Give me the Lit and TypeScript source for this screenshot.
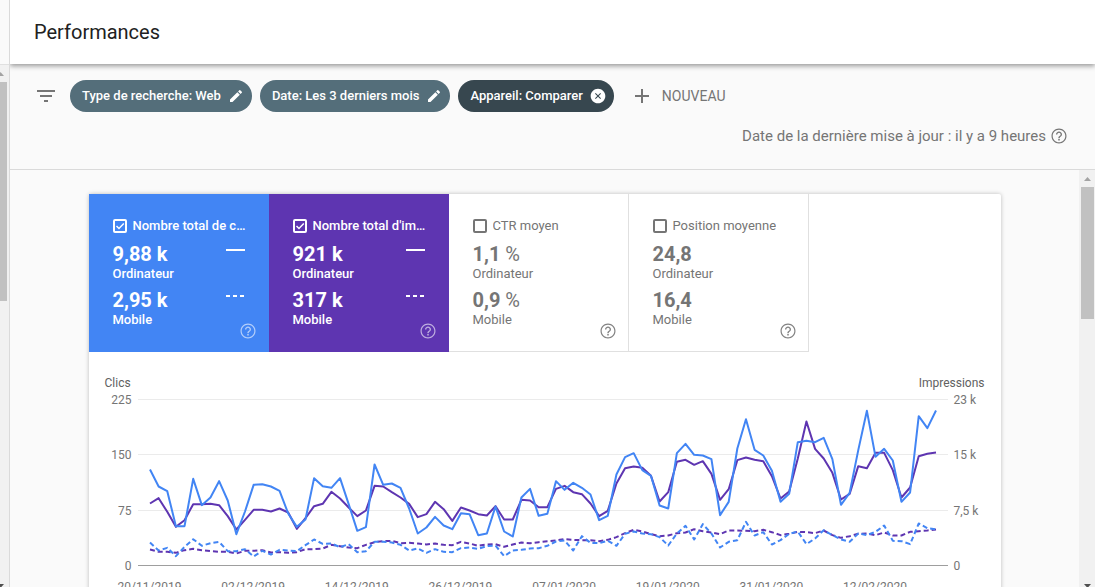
import { LitElement, html, svg, css, nothing } from "lit";
import { customElement, property } from "lit/decorators.js";
import { classMap } from "lit/directives/class-map.js";

type Metric = {
  id: string;
  title: string;
  tone: string;
  checked: boolean;
  desktop: string;
  mobile: string;
  unit?: string;
};

const METRICS: Metric[] = [
  { id: "clicks", title: "Nombre total de clics", tone: "blue", checked: true, desktop: "9,88 k", mobile: "2,95 k" },
  { id: "impressions", title: "Nombre total d'impressions", tone: "purple", checked: true, desktop: "921 k", mobile: "317 k" },
  { id: "ctr", title: "CTR moyen", tone: "plain", checked: false, desktop: "1,1", mobile: "0,9", unit: "%" },
  { id: "position", title: "Position moyenne", tone: "plain", checked: false, desktop: "24,8", mobile: "16,4" },
];

// One sample per day, measured downwards: TOP is the highest grid line, BASE the axis.
const TOP = 88;
const BASE = 586;

const CLICKS_DESKTOP = [
  298, 349, 363, 468, 468, 326, 405, 382, 333, 391, 492, 424, 344, 342, 349, 362, 430, 470, 448, 324, 348, 353, 324,
  402, 482, 471, 283, 344, 340, 353, 415, 490, 472, 440, 466, 477, 429, 432, 495, 490, 409, 484, 499, 382, 356, 437,
  431, 333, 359, 338, 353, 373, 450, 437, 313, 261, 249, 300, 317, 406, 415, 249, 221, 254, 256, 267, 435, 395, 235,
  147, 239, 256, 302, 395, 371, 216, 212, 216, 203, 267, 404, 368, 240, 122, 260, 236, 271, 395, 367, 138, 174, 121,
];
const IMPRESSIONS_DESKTOP = [
  400, 384, 425, 470, 450, 402, 402, 401, 405, 438, 478, 449, 419, 419, 424, 415, 427, 476, 444, 408, 401, 365, 385,
  412, 438, 421, 347, 349, 366, 382, 401, 441, 432, 395, 417, 452, 412, 421, 432, 436, 408, 448, 448, 389, 391, 411,
  411, 356, 347, 366, 372, 400, 438, 422, 340, 294, 289, 293, 317, 394, 366, 275, 269, 284, 273, 311, 389, 357, 270,
  262, 269, 273, 318, 385, 364, 265, 154, 236, 265, 308, 388, 371, 288, 294, 248, 248, 300, 382, 352, 258, 251, 247,
];
const IMPRESSIONS_MOBILE = [
  538, 545, 545, 548, 540, 536, 540, 543, 545, 545, 550, 542, 542, 540, 547, 546, 548, 546, 537, 537, 535, 524, 528,
  532, 534, 524, 516, 513, 512, 519, 518, 520, 523, 520, 524, 525, 515, 520, 527, 523, 522, 530, 523, 517, 519, 516,
  513, 511, 507, 509, 510, 510, 513, 509, 501, 489, 479, 484, 492, 498, 496, 489, 487, 477, 483, 487, 492, 481, 481,
  482, 483, 479, 486, 495, 491, 485, 486, 489, 481, 495, 503, 498, 491, 490, 495, 487, 496, 496, 485, 483, 481, 478,
];
const CLICKS_MOBILE = [
  517, 541, 533, 558, 530, 507, 527, 519, 515, 543, 543, 537, 559, 542, 553, 539, 541, 543, 525, 508, 521, 520, 531,
  522, 546, 543, 515, 515, 517, 524, 541, 535, 548, 537, 545, 546, 534, 532, 536, 528, 526, 558, 541, 539, 535, 534,
  527, 514, 511, 541, 498, 518, 519, 512, 527, 491, 484, 490, 492, 501, 526, 490, 467, 508, 462, 490, 532, 515, 510,
  455, 496, 486, 523, 510, 491, 484, 522, 505, 480, 495, 508, 515, 490, 495, 485, 466, 512, 513, 522, 460, 474, 478,
];

const DATES = [
  "20/11/2019", "02/12/2019", "14/12/2019", "26/12/2019",
  "07/01/2020", "19/01/2020", "31/01/2020", "12/02/2020",
];

const helpIcon = html`<svg class="glyph" viewBox="0 0 24 24" aria-hidden="true">
  <path fill="currentColor" d="M11 18h2v-2h-2v2zm1-16C6.480 2 2 6.480 2 12s4.480 10 10 10 10-4.480 10-10S17.520 2 12 2zm0 18.400c-4.630 0-8.400-3.770-8.400-8.400S7.370 3.600 12 3.600s8.400 3.770 8.400 8.400-3.770 8.400-8.400 8.400zM12 6c-2.210 0-4 1.790-4 4h1.800c0-1.210.99-2.200 2.200-2.200s2.200.99 2.200 2.200c0 2-3.100 1.750-3.100 5h1.800c0-2.250 3.100-2.500 3.100-5 0-2.210-1.790-4-4-4z"/>
</svg>`;

const pencilIcon = html`<svg class="glyph" viewBox="0 0 24 24" aria-hidden="true">
  <path fill="currentColor" d="M3 17.250V21h3.750L17.810 9.940l-3.750-3.750L3 17.250zM20.710 7.040a1 1 0 0 0 0-1.410l-2.340-2.340a1 1 0 0 0-1.410 0l-1.830 1.830 3.750 3.750 1.830-1.830z"/>
</svg>`;

const closeIcon = html`<svg class="glyph" viewBox="0 0 24 24" aria-hidden="true">
  <path fill="currentColor" d="M12 1C5.920 1 1 5.920 1 12s4.920 11 11 11 11-4.920 11-11S18.080 1 12 1zm4.500 14.400L15.400 16.500 12 13.100 8.600 16.500 7.500 15.400l3.400-3.400L7.500 8.600 8.600 7.500l3.400 3.400 3.400-3.400L16.500 8.600 13.100 12z"/>
</svg>`;

@customElement("scroll-track")
export class ScrollTrack extends LitElement {
  @property({ type: Number }) thumb = 100;

  static styles = css`
    :host {
      display: flex;
      flex-direction: column;
      align-items: center;
      box-sizing: border-box;
      background: #f1f1f1;
      overflow: hidden;
    }
    .arrow {
      flex: none;
      width: 17px;
      height: 17px;
      display: block;
    }
    .thumb {
      flex: none;
      width: 13px;
      background: #c1c1c1;
    }
    .rest {
      flex: 1;
    }
    .end {
      height: 7px;
    }
  `;

  render() {
    return html`
      <svg class="arrow" viewBox="0 0 17 17"><path fill="#a3a3a3" d="M5 11h7L8.500 7z" /></svg>
      <div class="thumb" style="height:${this.thumb}px"></div>
      <div class="rest"></div>
      <svg class="arrow end" viewBox="0 0 17 7"><path fill="#505050" d="M5 4h7L8.500 8z" /></svg>
    `;
  }
}

@customElement("metric-tile")
export class MetricTile extends LitElement {
  @property({ attribute: false }) metric!: Metric;

  static styles = css`
    :host {
      display: block;
      flex: 0 1 180px;
      min-width: 0;
    }
    .tile {
      box-sizing: border-box;
      height: 158px;
      padding: 22px 22px 0 24px;
      display: flex;
      flex-direction: column;
      position: relative;
      font-size: 13px;
      line-height: 18px;
      color: #757575;
    }
    .plain {
      border: solid #e0e0e0;
      border-width: 0 1px 1px 0;
    }
    .blue,
    .purple {
      color: #fff;
      font-weight: 500;
    }
    .blue {
      background: #4285f4;
    }
    .purple {
      background: #5e35b1;
    }
    .title {
      display: flex;
      align-items: center;
      gap: 6px;
      height: 20px;
      margin-bottom: 6px;
    }
    .name {
      overflow: hidden;
      white-space: nowrap;
      text-overflow: ellipsis;
    }
    .box {
      appearance: none;
      flex: none;
      box-sizing: border-box;
      width: 14px;
      height: 14px;
      margin: 0;
      border: 2px solid currentColor;
      border-radius: 2px;
      color: inherit;
    }
    .box:checked {
      background: url("data:image/svg+xml,%3Csvg xmlns='http://www.w3.org/2000/svg' viewBox='0 0 10 10'%3E%3Cpath d='M1.500 5l2.500 2.500L8.800 2.500' fill='none' stroke='white' stroke-width='1.500'/%3E%3C/svg%3E")
        center / 10px 10px no-repeat;
    }
    .row {
      display: flex;
      justify-content: space-between;
      height: 46px;
      padding-right: 2px;
    }
    .value {
      font-size: 20px;
      line-height: 24px;
      font-weight: 700;
    }
    .unit {
      font-weight: 400;
    }
    .who {
      line-height: 16px;
    }
    .key {
      width: 19px;
      height: 2px;
      margin-top: 7px;
      background: currentColor;
    }
    .dashed {
      background: repeating-linear-gradient(to right, currentColor 0 4px, transparent 4px 7px);
    }
    .help {
      position: absolute;
      right: 12px;
      bottom: 12px;
      width: 18px;
      height: 18px;
      padding: 0;
      border: 0;
      background: none;
      color: inherit;
      opacity: 0.6;
    }
    .plain .help {
      right: 11px;
      bottom: 11px;
      opacity: 0.9;
    }
    .glyph {
      display: block;
      width: 18px;
      height: 18px;
    }
  `;

  private row(value: string, who: string, dashed: boolean) {
    const { unit, checked } = this.metric;
    return html`<div class="row">
      <div>
        <div class="value">${value}${unit ? html` <span class="unit">${unit}</span>` : nothing}</div>
        <div class="who">${who}</div>
      </div>
      ${checked ? html`<div class=${classMap({ key: true, dashed })}></div>` : nothing}
    </div>`;
  }

  render() {
    const m = this.metric;
    return html`<div class="tile ${m.tone}">
      <label class="title" for=${m.id}>
        <input class="box" type="checkbox" id=${m.id} .checked=${m.checked} />
        <span class="name">${m.title}</span>
      </label>
      ${this.row(m.desktop, "Ordinateur", false)} ${this.row(m.mobile, "Mobile", true)}
      <button class="help" type="button" aria-label="Aide">${helpIcon}</button>
    </div>`;
  }
}

@customElement("trend-chart")
export class TrendChart extends LitElement {
  static styles = css`
    :host {
      display: block;
      padding: 23px 16px 0;
      font-size: 12px;
      line-height: 16px;
      color: #757575;
    }
    .names {
      display: flex;
      justify-content: space-between;
      color: #616161;
    }
    .body {
      display: grid;
      grid-template-columns: 27px minmax(0, 1fr) 31px;
      column-gap: 6px;
    }
    .scale {
      display: flex;
      flex-direction: column;
      justify-content: space-between;
      height: 182px;
      margin-top: 1px;
      white-space: nowrap;
    }
    .left {
      text-align: right;
    }
    .plot {
      display: block;
      width: 100%;
      height: 168px;
      margin-top: 8px;
      overflow: visible;
    }
    .grid {
      stroke: #ebebeb;
    }
    .axis {
      stroke: #9e9e9e;
    }
    .series {
      fill: none;
      stroke-width: 2;
      stroke-linejoin: round;
    }
    .blue {
      stroke: #4285f4;
    }
    .purple {
      stroke: #5e35b1;
    }
    .dashed {
      stroke-dasharray: 5 3;
    }
    .dates {
      grid-column: 2;
      display: flex;
      padding: 5px 12px 0;
    }
    .date {
      flex: none;
      display: flex;
    }
    .anchor {
      display: flex;
      justify-content: center;
      width: 0;
      white-space: nowrap;
    }
  `;

  private line(data: number[], cls: string) {
    const step = 2358 / (data.length - 1);
    const points = data.map((v, i) => `${(36 + i * step).toFixed(1)},${v - TOP}`).join(" ");
    return svg`<polyline class="series ${cls}" points=${points} vector-effect="non-scaling-stroke" />`;
  }

  render() {
    const height = BASE - TOP;
    return html`
      <div class="names"><span>Clics</span><span>Impressions</span></div>
      <div class="body">
        <div class="scale left"><span>225</span><span>150</span><span>75</span><span>0</span></div>
        <svg class="plot" viewBox="0 -1.5 2430 504" preserveAspectRatio="none" role="img" aria-label="Clics et impressions">
          ${[0, 1, 2].map(
            (n) => svg`<line class="grid" x1="0" x2="2430" y1=${(n * height) / 3} y2=${(n * height) / 3}
              vector-effect="non-scaling-stroke" shape-rendering="crispEdges" />`
          )}
          <line class="axis" x1="0" x2="2430" y1=${height} y2=${height} vector-effect="non-scaling-stroke"
            shape-rendering="crispEdges" />
          ${this.line(IMPRESSIONS_MOBILE, "purple dashed")} ${this.line(CLICKS_MOBILE, "blue dashed")}
          ${this.line(IMPRESSIONS_DESKTOP, "purple")} ${this.line(CLICKS_DESKTOP, "blue")}
        </svg>
        <div class="scale"><span>23 k</span><span>15 k</span><span>7,5 k</span><span>0</span></div>
        <div class="dates">
          ${DATES.map(
            (d) => html`<div class="date" style="width:${(1200 / 91).toFixed(3)}%"><span class="anchor">${d}</span></div>`
          )}
        </div>
      </div>
    `;
  }
}

@customElement("app-root")
export class AppRoot extends LitElement {
  static styles = css`
    :host {
      display: grid;
      grid-template-columns: 10px minmax(0, 1fr);
      height: 100vh;
      overflow: hidden;
      background: #fafafa;
      font-family: Roboto, "Liberation Sans", sans-serif;
      color: #757575;
    }
    .rail {
      display: flex;
      flex-direction: column;
      border-right: 1px solid #dadada;
      overflow: hidden;
    }
    .rail-top {
      flex: none;
      height: 64px;
      border-bottom: 1px solid #e0e0e0;
    }
    .rail-scroll {
      flex: 1;
      align-self: flex-end;
      width: 17px;
    }
    .main {
      display: flex;
      flex-direction: column;
      min-height: 0;
    }
    .top {
      flex: none;
      display: flex;
      align-items: center;
      height: 64px;
      padding: 0 24px;
      background: #fff;
      box-shadow: 0 2px 5px rgba(0, 0, 0, 0.4);
      clip-path: inset(0 0 -12px 0);
      z-index: 1;
    }
    .heading {
      margin: 0;
      font-size: 20px;
      line-height: 28px;
      font-weight: 400;
      color: #212121;
    }
    .filters {
      flex: none;
      padding: 16px 27px 23px 24px;
      border-bottom: 1px solid #dadada;
    }
    .chips {
      display: flex;
      align-items: center;
      gap: 8px;
      height: 32px;
    }
    .filter-icon {
      flex: none;
      width: 24px;
      height: 24px;
      margin-right: 4px;
    }
    .chip {
      display: flex;
      align-items: center;
      gap: 7px;
      height: 32px;
      padding: 0 8px 0 12px;
      border: 0;
      border-radius: 16px;
      background: #546e7a;
      color: #fff;
      font: 500 13px/18px Roboto, "Liberation Sans", sans-serif;
      white-space: nowrap;
    }
    .dark {
      background: #37474f;
    }
    .chip .glyph {
      width: 16px;
      height: 16px;
    }
    .add {
      display: flex;
      align-items: center;
      gap: 8px;
      padding: 0 8px;
      border: 0;
      background: none;
      color: #757575;
      font: 400 14px/20px Roboto, "Liberation Sans", sans-serif;
    }
    .add .glyph {
      width: 24px;
      height: 24px;
    }
    .updated {
      display: flex;
      justify-content: flex-end;
      align-items: center;
      gap: 4px;
      margin-top: 14px;
      font-size: 15px;
      line-height: 20px;
    }
    .help {
      padding: 0;
      border: 0;
      background: none;
      color: inherit;
    }
    .glyph {
      display: block;
      width: 18px;
      height: 18px;
    }
    .lower {
      flex: 1;
      display: flex;
      min-height: 0;
    }
    .content {
      flex: 1;
      min-width: 0;
      padding: 24px 24px 0;
      overflow: hidden;
    }
    .card {
      max-width: 912px;
      min-height: 480px;
      margin: 0 auto;
      background: #fff;
      border-radius: 2px;
      box-shadow: 0 0 4px rgba(0, 0, 0, 0.25);
    }
    .tiles {
      display: flex;
    }
    .scroll {
      flex: none;
      width: 16px;
    }
  `;

  render() {
    return html`
      <div class="rail">
        <div class="rail-top"></div>
        <scroll-track class="rail-scroll" .thumb=${219}></scroll-track>
      </div>
      <main class="main">
        <header class="top"><h1 class="heading">Performances</h1></header>
        <section class="filters">
          <div class="chips">
            <svg class="filter-icon" viewBox="0 0 24 24" aria-hidden="true">
              <path fill="#757575" d="M10 18h4v-2h-4v2zM3 6v2h18V6H3zm3 7h12v-2H6v2z" />
            </svg>
            <button class="chip" type="button">Type de recherche: Web ${pencilIcon}</button>
            <button class="chip" type="button">Date: Les 3 derniers mois ${pencilIcon}</button>
            <button class="chip dark" type="button">Appareil: Comparer ${closeIcon}</button>
            <button class="add" type="button">
              <svg class="glyph" viewBox="0 0 24 24" aria-hidden="true">
                <path fill="currentColor" d="M19 13h-6v6h-2v-6H5v-2h6V5h2v6h6v2z" />
              </svg>
              NOUVEAU
            </button>
          </div>
          <div class="updated">
            <span>Date de la dernière mise à jour : il y a 9 heures</span>
            <button class="help" type="button" aria-label="Aide">${helpIcon}</button>
          </div>
        </section>
        <div class="lower">
          <div class="content">
            <article class="card">
              <div class="tiles">
                ${METRICS.map((m) => html`<metric-tile .metric=${m}></metric-tile>`)}
              </div>
              <trend-chart></trend-chart>
            </article>
          </div>
          <scroll-track class="scroll" .thumb=${132}></scroll-track>
        </div>
      </main>
    `;
  }
}
